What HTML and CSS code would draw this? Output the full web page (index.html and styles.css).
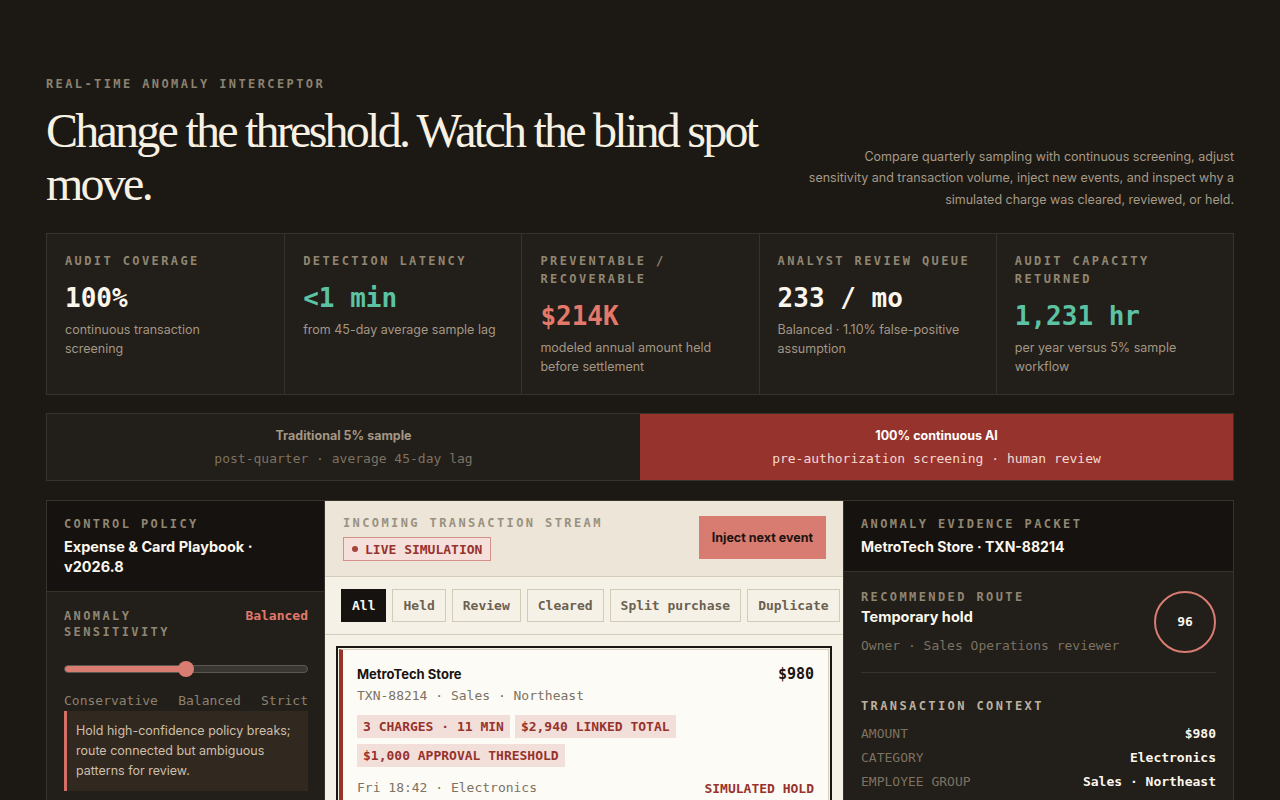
FILE: index.html
```html
<!DOCTYPE html>
<html lang="en">
<head>
<meta charset="utf-8">
<title>Real-time Anomaly Interceptor</title>
<link rel="stylesheet" href="styles.css">
</head>
<body>
<main class="page">
  <header class="hero">
    <div class="hero-left">
      <p class="eyebrow">Real-time anomaly interceptor</p>
      <h1 class="headline">Change the threshold. Watch the blind spot move.</h1>
    </div>
    <p class="lede">Compare quarterly sampling with continuous screening, adjust sensitivity and transaction volume, inject new events, and inspect why a simulated charge was cleared, reviewed, or held.</p>
  </header>

  <section class="stats">
    <div class="stat">
      <div class="label">Audit coverage</div>
      <div class="value">100%</div>
      <div class="desc">continuous transaction screening</div>
    </div>
    <div class="stat">
      <div class="label">Detection latency</div>
      <div class="value teal">&lt;1 min</div>
      <div class="desc">from 45-day average sample lag</div>
    </div>
    <div class="stat">
      <div class="label">Preventable / recoverable</div>
      <div class="value salmon">$214K</div>
      <div class="desc">modeled annual amount held before settlement</div>
    </div>
    <div class="stat">
      <div class="label">Analyst review queue</div>
      <div class="value">233 / mo</div>
      <div class="desc">Balanced · 1.10% false-positive assumption</div>
    </div>
    <div class="stat">
      <div class="label">Audit capacity returned</div>
      <div class="value teal">1,231 hr</div>
      <div class="desc">per year versus 5% sample workflow</div>
    </div>
  </section>

  <section class="compare">
    <div class="mode">
      <div class="mode-title">Traditional 5% sample</div>
      <div class="mode-sub">post-quarter · average 45-day lag</div>
    </div>
    <div class="mode active">
      <div class="mode-title">100% continuous AI</div>
      <div class="mode-sub">pre-authorization screening · human review</div>
    </div>
  </section>

  <section class="workspace">
    <aside class="panel policy">
      <div class="panel-head">
        <div class="label">Control policy</div>
        <div class="panel-title">Expense &amp; Card Playbook · v2026.8</div>
      </div>
      <div class="panel-body">
        <div class="sens-head">
          <div class="label sens-label">Anomaly sensitivity</div>
          <div class="sens-value">Balanced</div>
        </div>
        <div class="slider">
          <div class="slider-track"><div class="slider-fill" style="width: 50%"></div></div>
          <div class="slider-thumb" style="left: 50%"></div>
        </div>
        <div class="slider-scale"><span>Conservative</span><span>Balanced</span><span>Strict</span></div>
        <div class="note">Hold high-confidence policy breaks; route connected but ambiguous patterns for review.</div>
      </div>
    </aside>

    <section class="stream">
      <div class="stream-head">
        <div class="stream-head-text">
          <div class="label stream-label">Incoming transaction stream</div>
          <span class="live"><span class="live-dot"></span>Live simulation</span>
        </div>
        <button class="inject" type="button">Inject next event</button>
      </div>
      <div class="filters">
        <button class="filter active" type="button">All</button>
        <button class="filter" type="button">Held</button>
        <button class="filter" type="button">Review</button>
        <button class="filter" type="button">Cleared</button>
        <button class="filter" type="button">Split purchase</button>
        <button class="filter" type="button">Duplicate</button>
      </div>
      <div class="txn-list">
        <article class="txn selected">
          <div class="txn-top">
            <div>
              <div class="txn-name">MetroTech Store</div>
              <div class="txn-meta">TXN-88214 · Sales · Northeast</div>
            </div>
            <div class="txn-amount">$980</div>
          </div>
          <div class="tags">
            <span class="tag">3 charges · 11 min</span>
            <span class="tag">$2,940 linked total</span>
            <span class="tag">$1,000 approval threshold</span>
          </div>
          <div class="txn-foot">
            <span class="txn-meta">Fri 18:42 · Electronics</span>
            <span class="txn-status">Simulated hold</span>
          </div>
        </article>
      </div>
    </section>

    <aside class="panel evidence">
      <div class="panel-head">
        <div class="label">Anomaly evidence packet</div>
        <div class="panel-title">MetroTech Store · TXN-88214</div>
      </div>
      <div class="panel-body evidence-body">
        <div class="route">
          <div>
            <div class="label">Recommended route</div>
            <div class="route-title">Temporary hold</div>
            <div class="route-owner">Owner · Sales Operations reviewer</div>
          </div>
          <div class="score">96</div>
        </div>
        <div class="context">
          <div class="label context-label">Transaction context</div>
          <div class="ctx-row"><span>Amount</span><strong>$980</strong></div>
          <div class="ctx-row"><span>Category</span><strong>Electronics</strong></div>
          <div class="ctx-row"><span>Employee group</span><strong>Sales · Northeast</strong></div>
        </div>
      </div>
    </aside>
  </section>
</main>
</body>
</html>
```

FILE: styles.css
```css
* { box-sizing: border-box; }

html, body {
  margin: 0;
  background: #1c1914;
}

body {
  font-family: "Inter", "Roboto", sans-serif;
  color: #f5efe3;
}

.page {
  padding: 76px 46px 40px;
}

/* ---------- hero ---------- */
.hero {
  display: flex;
  justify-content: space-between;
  align-items: flex-end;
}

.eyebrow {
  margin: 0;
  font-family: "DejaVu Sans Mono", monospace;
  font-size: 12px;
  line-height: 16px;
  font-weight: 700;
  letter-spacing: 0.2em;
  text-transform: uppercase;
  color: #8c8270;
}

.headline {
  margin: 12px 0 0;
  max-width: 740px;
  font-family: "Liberation Serif", serif;
  font-weight: 400;
  font-size: 48px;
  line-height: 53px;
  letter-spacing: -2.75px;
  color: #f7f1e4;
}

.lede {
  margin: 0;
  max-width: 430px;
  text-align: right;
  font-size: 12.5px;
  line-height: 21.5px;
  color: #a69a87;
}

/* ---------- shared ---------- */
.label {
  font-family: "DejaVu Sans Mono", monospace;
  font-size: 12px;
  line-height: 18px;
  font-weight: 700;
  letter-spacing: 0.2em;
  text-transform: uppercase;
  color: #908672;
}

/* ---------- stats ---------- */
.stats {
  margin-top: 23px;
  display: grid;
  grid-template-columns: repeat(5, 1fr);
  background: #221e19;
  border: 1px solid #38322a;
}

.stat {
  padding: 18px 18px 18px;
  border-left: 1px solid #38322a;
}

.stat:first-child { border-left: 0; }

.value {
  margin-top: 12px;
  font-family: "DejaVu Sans Mono", monospace;
  font-weight: 700;
  font-size: 26px;
  line-height: 32px;
  color: #fbf6ec;
}

.value.teal { color: #5bc3a3; }
.value.salmon { color: #e2796b; }

.desc {
  margin-top: 7px;
  max-width: 195px;
  font-size: 12.5px;
  line-height: 18.5px;
  color: #a39785;
}

/* ---------- compare toggle ---------- */
.compare {
  margin-top: 18px;
  display: grid;
  grid-template-columns: 1fr 1fr;
  border: 1px solid #38322a;
  background: #221e19;
}

.mode {
  padding: 13px 16px 12px;
  text-align: center;
}

.mode-title {
  font-size: 12.5px;
  line-height: 18px;
  font-weight: 700;
  color: #a39785;
}

.mode-sub {
  margin-top: 5px;
  font-family: "DejaVu Sans Mono", monospace;
  font-size: 13px;
  line-height: 18px;
  color: #7c7262;
}

.mode.active { background: #97332d; }
.mode.active .mode-title { color: #ffffff; }
.mode.active .mode-sub { color: #f3d9d2; }

/* ---------- workspace ---------- */
.workspace {
  margin-top: 19px;
  display: grid;
  grid-template-columns: 279px 1fr 391px;
  align-items: stretch;
}

.panel {
  background: #221e19;
  border: 1px solid #38322a;
}

.panel-head {
  background: #15120f;
  padding: 14px 17px 14px;
  border-bottom: 1px solid #38322a;
}

.panel-title {
  margin-top: 4px;
  font-size: 14.5px;
  line-height: 20px;
  font-weight: 700;
  color: #fbf6ec;
}

.evidence .panel-title { font-size: 14px; }

.panel-body {
  padding: 16px 16px 20px 17px;
}

.evidence .panel-body {
  padding: 16px 17px 20px;
}

.sens-head {
  display: flex;
  justify-content: space-between;
  align-items: flex-start;
}

.sens-label {
  line-height: 16px;
  max-width: 130px;
}

.sens-value {
  font-family: "DejaVu Sans Mono", monospace;
  font-size: 13px;
  line-height: 16px;
  font-weight: 700;
  color: #e2796b;
}

.slider {
  position: relative;
  margin-top: 21px;
  height: 16px;
  display: flex;
  align-items: center;
}

.slider-track {
  width: 100%;
  height: 8px;
  border-radius: 4px;
  background: #3a3631;
  border: 1px solid #5b5650;
  overflow: hidden;
}

.slider-fill {
  height: 100%;
  background: #d97c72;
}

.slider-thumb {
  position: absolute;
  top: 0;
  width: 16px;
  height: 16px;
  margin-left: -8px;
  border-radius: 50%;
  background: #d97c72;
}

.slider-scale {
  margin-top: 16px;
  display: flex;
  justify-content: space-between;
  font-family: "DejaVu Sans Mono", monospace;
  font-size: 13px;
  line-height: 16px;
  color: #8c8270;
}

.note {
  margin-top: 2px;
  padding: 10px 8px 10px 9px;
  background: #312820;
  border-left: 3px solid #d27068;
  font-size: 12.5px;
  line-height: 20px;
  color: #cdbfaa;
}

/* ---------- stream ---------- */
.stream {
  background: #f6f1e7;
  border-top: 1px solid #38322a;
  overflow: hidden;
}

.stream-head {
  background: #ece5d8;
  padding: 14px 17px 15px 18px;
  border-bottom: 1px solid #d5ccbc;
  display: flex;
  justify-content: space-between;
  align-items: flex-start;
}

.stream-label {
  color: #9a917f;
  line-height: 16px;
}

.live {
  margin-top: 6px;
  display: inline-flex;
  align-items: center;
  gap: 7px;
  height: 24px;
  padding: 0 8px;
  border: 1px solid #d39189;
  background: #f5e0dc;
  font-family: "DejaVu Sans Mono", monospace;
  font-size: 13px;
  font-weight: 700;
  text-transform: uppercase;
  color: #97332d;
}

.live-dot {
  width: 6px;
  height: 6px;
  border-radius: 50%;
  background: #a5443d;
}

.inject {
  margin-top: 1px;
  height: 43px;
  padding: 0 13px;
  border: 0;
  background: #d87c72;
  font-family: "Inter", "Roboto", sans-serif;
  font-size: 12.5px;
  font-weight: 700;
  color: #1c1410;
}

.filters {
  display: flex;
  gap: 6px;
  padding: 12px 16px;
  border-bottom: 1px solid #d5ccbc;
  overflow: hidden;
}

.filter {
  flex: none;
  height: 33px;
  padding: 0 10px;
  border: 1px solid #d4cab8;
  background: transparent;
  font-family: "DejaVu Sans Mono", monospace;
  font-size: 13px;
  font-weight: 700;
  color: #6b6151;
}

.filter.active {
  background: #15120f;
  border-color: #15120f;
  color: #fbf6ec;
}

.txn-list {
  padding: 14px 14px 20px;
}

.txn {
  background: #fdfbf6;
  border: 1px solid #d8d0c0;
  border-left: 4px solid #97332d;
  padding: 15px 14px 12px 14px;
}

.txn.selected {
  outline: 2px solid #1a1612;
  outline-offset: 1px;
}

.txn-top {
  display: flex;
  justify-content: space-between;
  align-items: flex-start;
}

.txn-name {
  font-size: 13px;
  line-height: 18px;
  font-weight: 700;
  color: #1a1410;
}

.txn-meta {
  font-family: "DejaVu Sans Mono", monospace;
  font-size: 13px;
  line-height: 20px;
  color: #7c7262;
}

.txn-top .txn-meta { margin-top: 3px; }

.txn-amount {
  font-family: "DejaVu Sans Mono", monospace;
  font-size: 15px;
  line-height: 18px;
  font-weight: 700;
  color: #1a1410;
}

.tags {
  margin-top: 9px;
  display: flex;
  flex-wrap: wrap;
  gap: 6px 5px;
}

.tag {
  padding: 3px 6px 2px;
  background: #f3dfda;
  font-family: "DejaVu Sans Mono", monospace;
  font-size: 13px;
  line-height: 18px;
  font-weight: 700;
  text-transform: uppercase;
  color: #97332d;
}

.txn-foot {
  margin-top: 11px;
  display: flex;
  justify-content: space-between;
  align-items: center;
}

.txn-status {
  font-family: "DejaVu Sans Mono", monospace;
  font-size: 13px;
  font-weight: 700;
  text-transform: uppercase;
  color: #97332d;
}

/* ---------- evidence ---------- */
.route {
  display: flex;
  justify-content: space-between;
  align-items: center;
  padding-bottom: 17px;
  border-bottom: 1px solid #38322a;
}

.route-title {
  margin-top: 1px;
  font-size: 14.5px;
  line-height: 20px;
  font-weight: 700;
  color: #fbf6ec;
}

.route-owner {
  margin-top: 10px;
  font-family: "DejaVu Sans Mono", monospace;
  font-size: 13px;
  line-height: 18px;
  color: #7c7262;
}

.score {
  width: 62px;
  height: 62px;
  border: 2px solid #d97c72;
  border-radius: 50%;
  display: flex;
  align-items: center;
  justify-content: center;
  font-family: "DejaVu Sans Mono", monospace;
  font-size: 13px;
  font-weight: 700;
  color: #fbf6ec;
}

.context { padding-top: 24px; }

.context-label { color: #bdb09c; }

.ctx-row {
  display: flex;
  justify-content: space-between;
  font-family: "DejaVu Sans Mono", monospace;
  font-size: 13px;
  line-height: 24px;
}

.context-label + .ctx-row { margin-top: 7px; }

.ctx-row span {
  text-transform: uppercase;
  color: #7c7262;
}

.ctx-row strong {
  font-weight: 700;
  color: #fbf6ec;
}
```
